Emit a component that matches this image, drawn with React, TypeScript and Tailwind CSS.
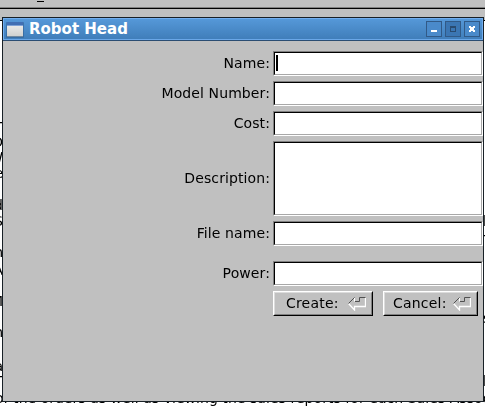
import type { ReactNode } from "react";

const fieldEdge =
  "box-border w-[210px] border border-t-[#808080] border-l-[#808080] border-b-white border-r-white";
const fieldInner =
  "h-full w-full border border-t-black border-l-black border-b-[#a8a8a8] border-r-[#a8a8a8] bg-white";

function Field({ label, tall, focused }: { label: string; tall?: boolean; focused?: boolean }) {
  return (
    <label className="flex items-center justify-end gap-[3px]">
      <span className="whitespace-pre pb-[2px] leading-[16px] tracking-[0.1px]">{label}</span>
      <span className={`${fieldEdge} ${tall ? "h-[75px]" : "h-[25px]"}`}>
        <span className={`${fieldInner} block pt-[2px] pl-px`}>
          {focused && <span className="block h-4 w-[2px] bg-black" />}
        </span>
      </span>
    </label>
  );
}

function ReturnArrow() {
  return (
    <svg width="18" height="14" viewBox="0 0 18 14" fill="none" className="shrink-0">
      <path d="M17.500 .5V9.500H6.500V13L.5 6.500" stroke="#fff" strokeWidth="1.300" />
      <path d="M6.500 1V4.500" stroke="#fff" />
      <path d="M.5 6.500L6.500 .5M7 4.500H11.500V.5H17.500" stroke="#505050" />
    </svg>
  );
}

function PushButton({ label, wide }: { label: string; wide?: boolean }) {
  return (
    <button
      className={`h-[25px] border border-t-white border-l-white border-r-black border-b-black ${wide ? "w-[100px]" : "w-[95px]"}`}
    >
      <span
        className={`flex h-full w-full items-center justify-between border border-t-[#dcdcdc] border-l-[#dcdcdc] border-r-[#808080] border-b-[#808080] pr-[5px] ${wide ? "pl-[11px]" : "pl-[8px]"}`}
      >
        <span className="pb-[2px] leading-[16px] tracking-[0.2px]">{label}</span>
        <ReturnArrow />
      </span>
    </button>
  );
}

function Control({ children, dim }: { children: ReactNode; dim?: boolean }) {
  return (
    <span className={`block h-4 w-4 border border-[#315a87] ${dim ? "bg-[#3b76b3]" : "bg-[#4a8aca]"}`}>
      <svg width="14" height="14" viewBox="0 0 14 14" shapeRendering="crispEdges">
        {children}
      </svg>
    </span>
  );
}

function WindowIcon() {
  return (
    <svg width="18" height="17" viewBox="0 0 18 17" className="shrink-0">
      <defs>
        <linearGradient id="pane" x1="0" y1="0" x2="0" y2="1">
          <stop stopColor="#f2f2f0" />
          <stop offset="1" stopColor="#cfd1d0" />
        </linearGradient>
      </defs>
      <rect x="0" y="1" width="18" height="16" rx="1" fill="#315f92" opacity=".6" />
      <rect x="1" y="1" width="16" height="14" fill="url(#pane)" />
      <rect x="1" y="1" width="16" height="4" fill="#416fb3" />
      <rect x="1" y="4" width="16" height="1" fill="#7fa2d6" />
      <rect x="1" y="15" width="16" height="1" fill="#70889e" />
    </svg>
  );
}

const leftGlyphs = [
  { top: 120, text: "T" },
  { top: 135, text: "D" },
  { top: 150, text: "W" },
  { top: 166, text: "e" },
  { top: 198, text: "d" },
  { top: 214, text: "S" },
  { top: 245, text: "h" },
  { top: 263, text: "A" },
  { top: 294, text: "M" },
  { top: 325, text: "h" },
  { top: 359, text: "a" },
  { top: 374, text: "T" },
];

const rightGlyphs = [
  { top: 213, text: "h" },
  { top: 232, text: "T" },
  { top: 310, text: "s" },
  { top: 373, text: "h" },
];

export default function App() {
  return (
    <main className="relative h-[406px] w-[485px] overflow-hidden bg-white font-['DejaVu_Sans',sans-serif] text-[14px] text-black">
      <div className="h-[21px] border-b border-black bg-[#c0c0c0]">
        <div className="h-[9px] border-b border-black">
          <div className="flex h-2 border-b border-[#808080] pl-[37px]">
            <span className="mt-px h-px w-[7px] bg-black" />
          </div>
        </div>
      </div>

      <div className="absolute inset-0 will-change-transform">
        {leftGlyphs.map((g) => (
          <span key={g.top} className="absolute right-[482px] leading-[15px]" style={{ top: g.top }}>
            {g.text}
          </span>
        ))}
        {rightGlyphs.map((g) => (
          <span key={g.top} className="absolute left-[483px] leading-[16px]" style={{ top: g.top }}>
            {g.text}
          </span>
        ))}
        <p className="absolute top-[390px] -left-[5px] leading-[16px] tracking-[0.05px] whitespace-nowrap">
          of the orders as well as viewing the sales reports for each Sales Associate
        </p>
      </div>

      <section className="absolute top-[17px] left-[2px] h-[385px] w-[482px] border border-[#182026] bg-[#c0c0c0]">
        <header className="flex h-[22px] items-center border border-b-[#6aa7e8] border-t-[#72aef0] border-l-[#72aef0] border-r-[#72aef0] bg-linear-to-b from-[#5598d8] to-[#407eba] pr-[2px] pl-[2px]">
          <WindowIcon />
          <h1 className="ml-[5px] flex-1 text-[15px] leading-[19px] font-bold whitespace-nowrap text-white">
            Robot Head
          </h1>
          <div className="flex gap-[3px]">
            <Control>
              <path d="M4 8h6v2H4z" fill="#fff" />
            </Control>
            <Control dim>
              <path d="M4 4h6v6H4zM5 6v3h4V6z" fillRule="evenodd" fill="#294b70" />
            </Control>
            <Control>
              <path d="M4 4h2v1h2V4h2v2H9v2h1v2H8V9H6v1H4V8h1V6H4z" fill="#fff" />
            </Control>
          </div>
        </header>
        <div className="h-px bg-[#2b4d72]" />

        <form className="flex flex-col pt-[10px] will-change-transform">
          <div className="flex flex-col gap-[5px]">
            <Field label="Name:" focused />
            <Field label="Model Number:" />
            <Field label="Cost:" />
            <Field label="Description:" tall />
            <Field label="File name:" />
          </div>
          <div className="mt-[15px]">
            <Field label="Power:" />
          </div>
          <div className="mt-[5px] flex justify-end gap-[10px] pr-[5px]">
            <PushButton label="Create:" wide />
            <PushButton label="Cancel:" />
          </div>
        </form>
      </section>
    </main>
  );
}
